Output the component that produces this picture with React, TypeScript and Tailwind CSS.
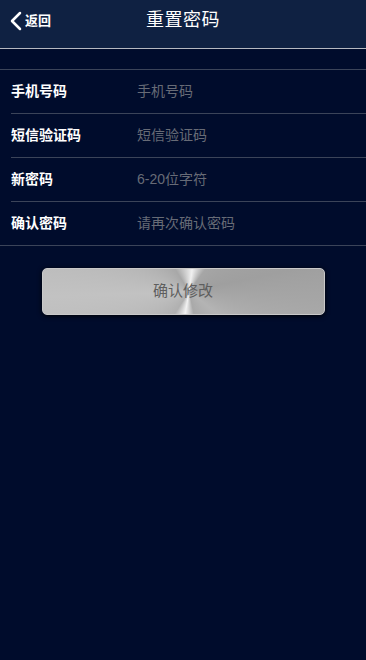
import { ChevronLeft } from 'lucide-react'

const FIELDS = [
  { label: '手机号码', placeholder: '手机号码', type: 'tel' },
  { label: '短信验证码', placeholder: '短信验证码', type: 'text' },
  { label: '新密码', placeholder: '6-20位字符', type: 'password' },
  { label: '确认密码', placeholder: '请再次确认密码', type: 'password' },
]

export default function App() {
  return (
    <div className="min-h-[660px] bg-[#000c2c] font-['Liberation_Sans','Noto_Sans_CJK_SC',sans-serif] text-white">
      <header className="relative flex h-[49px] items-center justify-center border-b border-[#b5b8c0] bg-[#0f2142] pb-[7px]">
        <button className="absolute left-0 top-0 flex h-[41px] items-center text-[13px] font-bold text-white">
          <ChevronLeft size={32} strokeWidth={1.9} className="-mr-[7px]" />
          返回
        </button>
        <h1 className="text-[18px] font-normal tracking-[0.5px]">重置密码</h1>
      </header>

      <div className="mt-5 border-t border-[#3b4459]">
        {FIELDS.map((f, i) => (
          <div
            key={f.label}
            className={
              i === FIELDS.length - 1
                ? 'flex h-[44px] items-center border-b border-[#3b4459] pl-[11px]'
                : 'ml-[11px] flex h-[44px] items-center border-b border-[#3b4459]'
            }
          >
            <span className="w-[126px] shrink-0 text-[14px] font-bold">{f.label}</span>
            <input
              type={f.type === 'password' ? 'text' : f.type}
              placeholder={f.placeholder}
              className="min-w-0 flex-1 bg-transparent text-[14px] text-white outline-none placeholder:text-[#676b76]"
            />
          </div>
        ))}
      </div>

      <div className="flex justify-center pt-[22px]">
        <button className="h-[47px] w-[283px] rounded-[5px] border border-[#c9c9c9] bg-[conic-gradient(from_8deg_at_52%_50%,#f0f0f0_0deg,#a6a6a6_28deg,#9f9f9f_70deg,#b4b4b4_120deg,#a9a9a9_160deg,#f2f2f2_182deg,#b0b0b0_205deg,#c2c2c2_260deg,#a8a8a8_320deg,#f0f0f0_360deg)] text-[15px] text-[#5e5e5e] shadow-[0_1px_5px_rgba(0,0,0,0.95)]">
          确认修改
        </button>
      </div>
    </div>
  )
}
